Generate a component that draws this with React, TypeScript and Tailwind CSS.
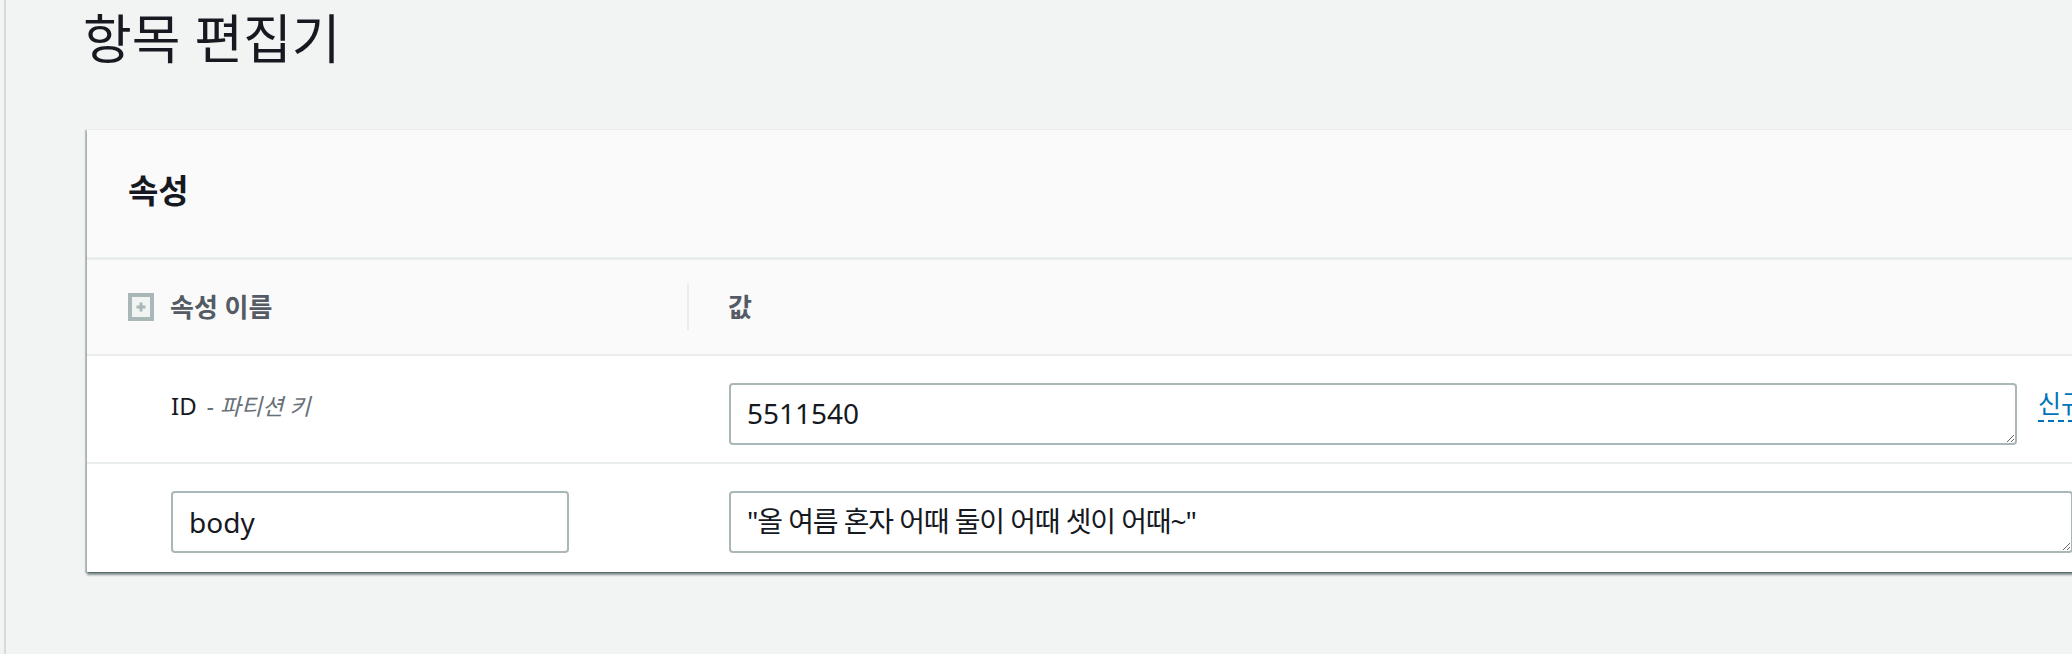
import React from 'react'

// Item editor: attribute table for a single record. Laid out at the
// reference's 1.32x scale, so sizes below are a bit larger than usual.

const FONT = "font-['Noto_Sans','Noto_Sans_CJK_KR',sans-serif]"

function ExpandBoxIcon() {
  return (
    <svg width="26" height="28" viewBox="0 0 26 28" aria-hidden="true">
      <rect x="2" y="2" width="22" height="24" fill="#f2f3f3" stroke="#aab7b8" strokeWidth="4" />
      <path d="M13 9.5v9M8.5 14h9" stroke="#aab7b8" strokeWidth="3" />
    </svg>
  )
}

const fieldClass =
  'block h-[62px] rounded-[4px] border-2 border-[#aab7b8] bg-white px-[16px] py-[8px] text-[28px] leading-[40px] text-[#16191f] outline-none'

export default function App() {
  return (
    <div className={`w-[2072px] h-[654px] overflow-hidden bg-[#f2f3f3] flex ${FONT}`}>
      <div className="w-[4px] shrink-0" />
      <main className="flex-1 min-w-0 border-l-2 border-[#d5dbdb] pl-[81px]">
        <h1 className="pt-[2px] -ml-[4px] text-[53px] leading-[74px] font-normal text-[#16191f] whitespace-nowrap">
          항목 편집기
        </h1>

        <section className="mt-[53px] w-[2200px] bg-white border-t border-[#eaeded] shadow-[0_3px_2px_0_rgba(0,28,36,0.45),2px_1px_1px_0_rgba(0,28,36,0.15),-2px_1px_1px_0_rgba(0,28,36,0.2)]">
          {/* Card header */}
          <div className="h-[130px] flex items-center pl-[41px] pb-[6px] bg-[#fafafa] border-b-[3px] border-[#eaeded]">
            <h2 className="text-[33px] font-bold text-[#16191f]">속성</h2>
          </div>

          {/* Column headers */}
          <div className="grid grid-cols-[600px_1fr] h-[96px] bg-[#fafafa] border-b-2 border-[#eaeded]">
            <div className="flex items-center gap-[16px] pl-[41px]">
              <ExpandBoxIcon />
              <span className="text-[26px] font-bold text-[#545b64]">속성 이름</span>
            </div>
            <div className="flex items-center">
              <div className="w-[2px] h-[46px] bg-[#eaeded]" />
              <span className="pl-[39px] text-[26px] font-bold text-[#545b64]">값</span>
            </div>
          </div>

          {/* Partition key row */}
          <div className="grid grid-cols-[600px_1fr] pt-[27px] pb-[17px] border-b-2 border-[#eaeded]">
            <div className="pl-[84px] pt-[5px] leading-[36px] whitespace-nowrap">
              <span className="text-[24px] text-[#16191f]">ID</span>
              <span className="ml-[10px] text-[23px] italic text-[#687078]">- 파티션 키</span>
            </div>
            <div className="flex items-start pl-[42px]">
              <textarea
                readOnly
                defaultValue="5511540"
                className={`${fieldClass} w-[1288px] overflow-hidden`}
              />
              <span className="ml-[21px] mt-[3px] text-[25px] leading-[34px] text-[#0073bb] border-b-2 border-dashed border-[#0073bb] whitespace-nowrap">
                신규
              </span>
            </div>
          </div>

          {/* Attribute row */}
          <div className="grid grid-cols-[600px_1fr] pt-[27px] pb-[19px]">
            <div className="pl-[84px]">
              <input readOnly defaultValue="body" className={`${fieldClass} w-[398px]`} />
            </div>
            <div className="pl-[42px]">
              <textarea
                readOnly
                defaultValue={'"올 여름 혼자 어때 둘이 어때 셋이 어때~"'}
                className={`${fieldClass} w-[1344px] overflow-hidden tracking-[-1.1px]`}
              />
            </div>
          </div>
        </section>
      </main>
    </div>
  )
}
